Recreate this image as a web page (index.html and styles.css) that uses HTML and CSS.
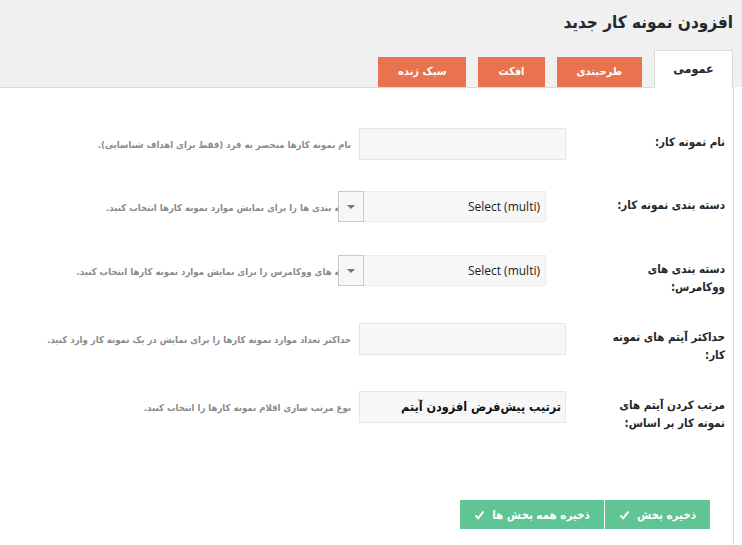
FILE: index.html
```html
<!DOCTYPE html>
<html lang="fa" dir="rtl">
<head>
  <meta charset="utf-8">
  <title>افزودن نمونه کار جدید</title>
  <link rel="stylesheet" href="styles.css">
</head>
<body>
  <div class="header">
    <h1 class="title">افزودن نمونه کار جدید</h1>
    <div class="tabs">
      <a class="tab active">عمومی</a>
      <a class="tab">طرحبندی</a>
      <a class="tab">افکت</a>
      <a class="tab">سبک زنده</a>
    </div>
  </div>

  <div class="panel">
    <table class="form-table">
      <tr>
        <th>نام نمونه کار:</th>
        <td>
          <div class="field">
            <input class="text-input" type="text">
            <span class="desc">نام نمونه کارها منحصر به فرد (فقط برای اهداف شناسایی).</span>
          </div>
        </td>
      </tr>
      <tr>
        <th>دسته بندی نمونه کار:</th>
        <td>
          <div class="field">
            <div class="select">
              <span class="select-value">Select (multi)</span>
              <span class="select-arrow"></span>
            </div>
            <span class="desc">دسته بندی ها را برای نمایش موارد نمونه کارها انتخاب کنید.</span>
          </div>
        </td>
      </tr>
      <tr>
        <th>دسته بندی های<br>ووکامرس:</th>
        <td>
          <div class="field">
            <div class="select">
              <span class="select-value">Select (multi)</span>
              <span class="select-arrow"></span>
            </div>
            <span class="desc">دسته های ووکامرس را برای نمایش موارد نمونه کارها انتخاب کنید.</span>
          </div>
        </td>
      </tr>
      <tr>
        <th>حداکثر آیتم های نمونه<br>کار:</th>
        <td>
          <div class="field">
            <input class="text-input" type="text">
            <span class="desc">حداکثر تعداد موارد نمونه کارها را برای نمایش در یک نمونه کار وارد کنید.</span>
          </div>
        </td>
      </tr>
      <tr>
        <th>مرتب کردن آیتم های<br>نمونه کار بر اساس:</th>
        <td>
          <div class="field">
            <div class="text-input filled">ترتیب پیش‌فرض افزودن آیتم</div>
            <span class="desc">نوع مرتب سازی اقلام نمونه کارها را انتخاب کنید.</span>
          </div>
        </td>
      </tr>
    </table>

    <div class="actions">
      <button class="save-btn" type="button">ذخیره بخش
        <svg class="check" width="11" height="10" viewBox="0 0 11 10"><polyline points="1.5,5.5 4.2,8.3 9.5,1.5" fill="none" stroke="#fff" stroke-width="2"/></svg>
      </button>
      <button class="save-btn" type="button">ذخیره همه بخش ها
        <svg class="check" width="11" height="10" viewBox="0 0 11 10"><polyline points="1.5,5.5 4.2,8.3 9.5,1.5" fill="none" stroke="#fff" stroke-width="2"/></svg>
      </button>
    </div>
  </div>
</body>
</html>
```

FILE: styles.css
```css
body {
  margin: 0;
  font-family: "DejaVu Sans Condensed", "DejaVu Sans", sans-serif;
  color: #23282d;
  background: #fff;
}
.header {
  background: #f0f0f1;
  padding: 10px 9px 0 0;
}
.title {
  margin: 0;
  font-size: 17px;
  font-weight: bold;
  line-height: 24px;
  color: #23282d;
}
.tabs {
  display: flex;
  align-items: flex-end;
  gap: 12px;
  margin-top: 16px;
}
.tab {
  display: block;
  height: 30px;
  line-height: 30px;
  padding: 0 20px;
  background: #e9724f;
  color: #fff;
  font-size: 11px;
  font-weight: bold;
  text-align: center;
}
.tab.active {
  width: 77px;
  padding: 0;
  height: 37px;
  line-height: 36px;
  background: #fff;
  color: #23282d;
  border: 1px solid #dcdcde;
  border-bottom: none;
  margin-bottom: -1px;
  position: relative;
  font-size: 12.5px;
}
.panel {
  margin-right: 8px;
  border-top: 1px solid #dcdcde;
  border-right: 1px solid #dcdcde;
  min-height: 456px;
  padding-top: 25px;
}
.form-table {
  border-collapse: collapse;
}
.form-table th {
  width: 124px;
  padding: 21px 8px 12px 35px;
  vertical-align: top;
  text-align: right;
  font-size: 11.5px;
  font-weight: bold;
  line-height: 17.5px;
  color: #23282d;
}
.form-table td {
  padding: 15px 0 16px 0;
  vertical-align: top;
}
.field {
  display: flex;
  align-items: center;
  gap: 8px;
}
.text-input {
  box-sizing: border-box;
  width: 207px;
  height: 32px;
  margin: 0;
  background: #f7f7f7;
  border: 1px solid #e6e6e6;
  font-family: "DejaVu Sans Condensed", "DejaVu Sans", sans-serif;
}
.text-input.filled {
  padding: 0 4px;
  line-height: 30px;
  font-size: 12.5px;
  font-weight: bold;
  color: #111;
}
.select {
  position: relative;
  box-sizing: border-box;
  width: 182px;
  height: 31px;
  margin-right: 20px;
  margin-bottom: 2px;
  background: #f7f7f7;
  border: 1px solid #ececec;
  border-left: none;
}
.select-value {
  display: block;
  padding-right: 5px;
  line-height: 29px;
  font-family: "Open Sans", sans-serif;
  font-size: 12px;
  color: #222;
}
.select-arrow {
  position: absolute;
  left: -26px;
  top: -1px;
  box-sizing: border-box;
  width: 26px;
  height: 31px;
  background: #f7f7f7;
  border: 1px solid #c9c9c9;
}
.select-arrow::after {
  content: "";
  position: absolute;
  left: 8px;
  top: 13px;
  border-left: 4px solid transparent;
  border-right: 4px solid transparent;
  border-top: 4px solid #777;
}
.desc {
  font-size: 9.5px;
  font-weight: bold;
  color: #8c8c8c;
  white-space: nowrap;
}
.actions {
  display: flex;
  gap: 1px;
  margin-top: 56px;
  padding-right: 23px;
}
.save-btn {
  display: flex;
  align-items: center;
  gap: 7px;
  height: 29px;
  padding: 0 14px;
  border: none;
  background: #5fc595;
  color: #fff;
  font-family: "DejaVu Sans Condensed", "DejaVu Sans", sans-serif;
  font-size: 11.5px;
  font-weight: bold;
}
.check {
  display: block;
}
```
